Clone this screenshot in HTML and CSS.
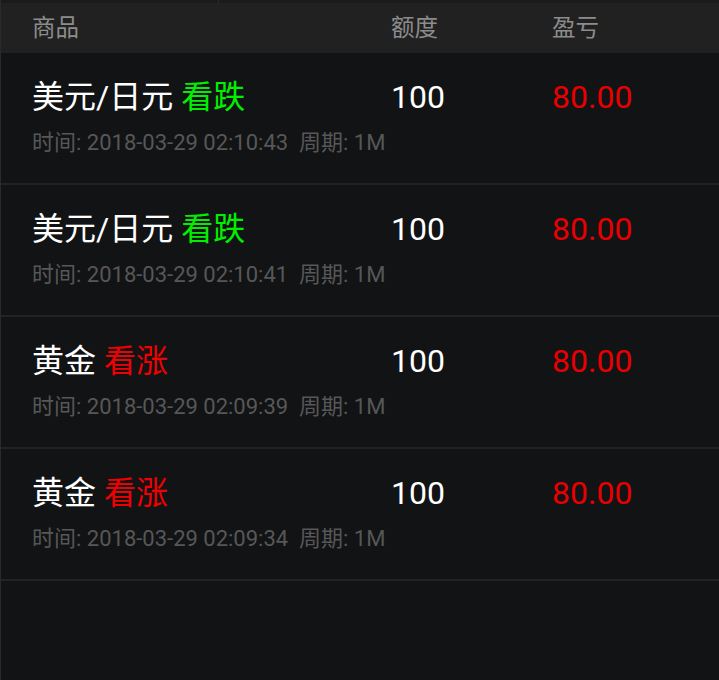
FILE: index.html
```html
<!DOCTYPE html>
<html lang="zh-CN">
<head>
<meta charset="utf-8">
<title>订单</title>
<link rel="stylesheet" href="styles.css">
</head>
<body>
<div class="page">
  <div class="topstrip"><div class="seg seg-a"></div><div class="seg seg-b"></div></div>
  <div class="head grid">
    <div>商品</div>
    <div>额度</div>
    <div>盈亏</div>
  </div>
  <div class="row">
    <div class="grid main">
      <div>美元/日元 <span class="down">看跌</span></div>
      <div class="num">100</div>
      <div class="num loss">80.00</div>
    </div>
    <div class="sub">时间: 2018-03-29 02:10:43&nbsp; 周期: 1M</div>
  </div>
  <div class="row">
    <div class="grid main">
      <div>美元/日元 <span class="down">看跌</span></div>
      <div class="num">100</div>
      <div class="num loss">80.00</div>
    </div>
    <div class="sub">时间: 2018-03-29 02:10:41&nbsp; 周期: 1M</div>
  </div>
  <div class="row">
    <div class="grid main">
      <div>黄金 <span class="up">看涨</span></div>
      <div class="num">100</div>
      <div class="num loss">80.00</div>
    </div>
    <div class="sub">时间: 2018-03-29 02:09:39&nbsp; 周期: 1M</div>
  </div>
  <div class="row">
    <div class="grid main">
      <div>黄金 <span class="up">看涨</span></div>
      <div class="num">100</div>
      <div class="num loss">80.00</div>
    </div>
    <div class="sub">时间: 2018-03-29 02:09:34&nbsp; 周期: 1M</div>
  </div>
</div>
</body>
</html>
```
FILE: styles.css
```css
html, body {
  margin: 0;
  padding: 0;
  background: #121315;
}
body {
  font-family: Roboto, "Noto Sans CJK SC", sans-serif;
}
.page {
  width: 719px;
  height: 680px;
  background: #121315;
  border-left: 1px solid #2a2a2c;
  box-sizing: border-box;
  overflow: hidden;
}
.topstrip {
  display: flex;
  height: 3px;
  background: #1b1b1b;
}
.seg-a {
  width: 217px;
  border-right: 1px solid #2a2a2a;
}
.grid {
  display: grid;
  grid-template-columns: 359px 161px 1fr;
  padding-left: 31px;
}
.head {
  height: 50px;
  box-sizing: border-box;
  padding-bottom: 4px;
  align-items: center;
  background: #212121;
  color: #8c8c8c;
  font-size: 23.5px;
}
.row {
  height: 130px;
  border-bottom: 2px solid #222324;
}
.main {
  padding-top: 24px;
  height: 40px;
  line-height: 40px;
  font-size: 32px;
  color: #ffffff;
  align-items: center;
}
.down { color: #00f000; }
.up { color: #f00000; }
.loss { color: #e80000; }
.sub {
  margin-top: 11px;
  padding-left: 31px;
  line-height: 30px;
  font-size: 22px;
  color: #575757;
}
```
